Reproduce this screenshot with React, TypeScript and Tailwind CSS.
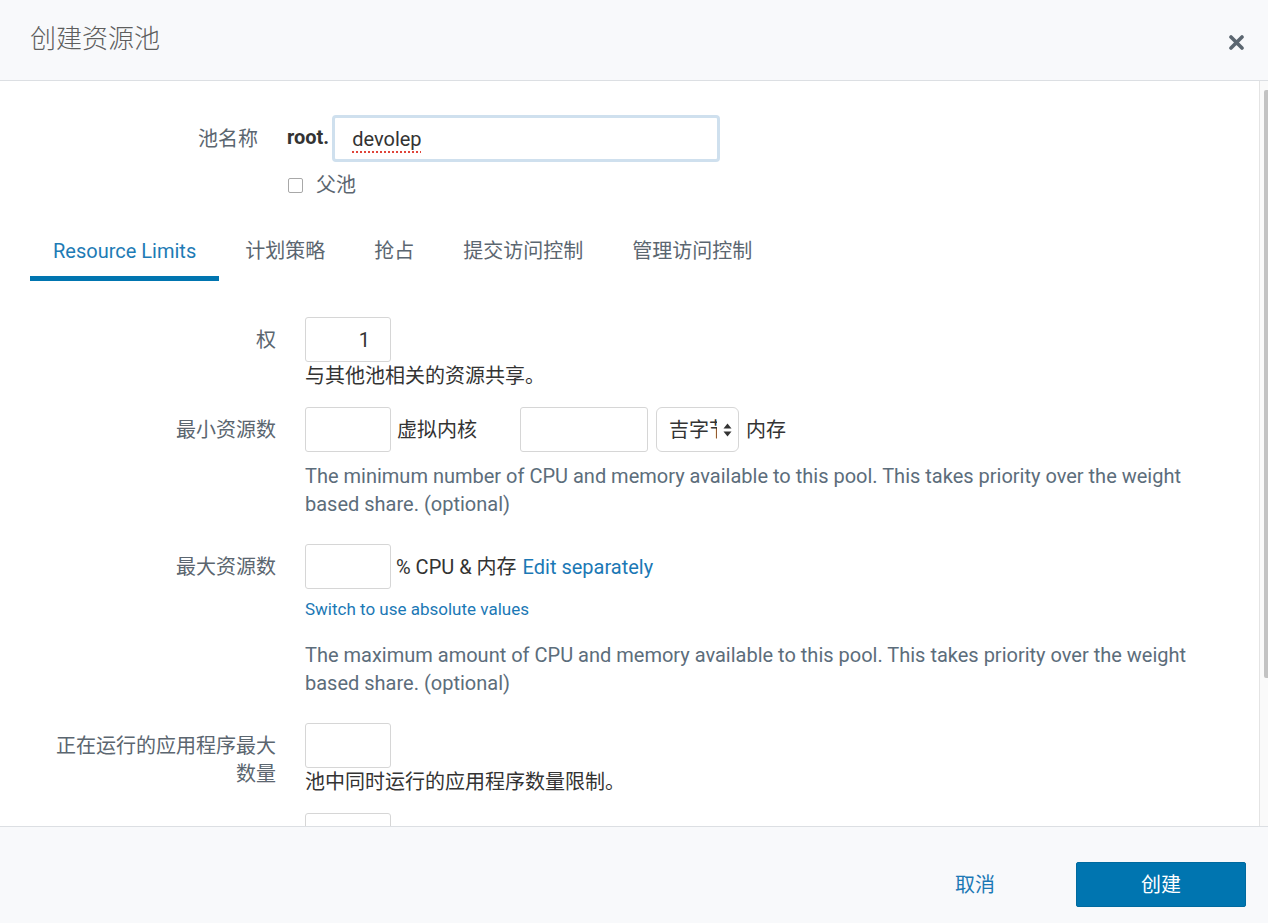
import React from "react";

function CloseIcon() {
  return (
    <svg width="15" height="15" viewBox="0 0 15 15" className="block">
      <path d="M2 2 L13 13 M13 2 L2 13" stroke="#5b6670" strokeWidth="3.6" strokeLinecap="round" />
    </svg>
  );
}

function SelectArrows() {
  return (
    <svg width="9" height="16" viewBox="0 0 9 16" className="block">
      <path d="M0.5 6.5 L4.5 1.5 L8.5 6.5 Z" fill="#333" />
      <path d="M0.5 9.5 L4.5 14.5 L8.5 9.5 Z" fill="#333" />
    </svg>
  );
}

function Box({ w = "w-[86px]", children }: { w?: string; children?: React.ReactNode }) {
  return (
    <div
      className={`${w} h-[45px] shrink-0 border border-[#d6d6d6] rounded-[3px] bg-white flex items-center justify-end pr-[20px] text-[#333]`}
    >
      {children}
    </div>
  );
}

function Row({ label, children, className = "" }: { label: React.ReactNode; children: React.ReactNode; className?: string }) {
  return (
    <div className={`flex ${className}`}>
      <div className="w-[276px] shrink-0 pl-[46px] pt-[9px] text-right leading-[28px] text-[#5b6670]">
        {label}
      </div>
      <div className="ml-[29px] flex-1">{children}</div>
    </div>
  );
}

const tabs = ["Resource Limits", "计划策略", "抢占", "提交访问控制", "管理访问控制"];

export default function App() {
  return (
    <div className="w-[1268px] h-[923px] flex flex-col bg-white text-[20px] font-['Roboto','Noto_Sans_CJK_SC',sans-serif] overflow-hidden">
      {/* 헤더 */}
      <div className="h-[81px] shrink-0 border-b border-[#dcdfe3] bg-[#f8f9fb] flex items-center justify-between pl-[30px] pr-[24px]">
        <h1 className="text-[26px] font-light text-[#5e5e5e] leading-none -mt-[2px]">创建资源池</h1>
        <div className="mt-[4px]">
          <CloseIcon />
        </div>
      </div>

      {/* 본문 */}
      <div className="flex-1 flex overflow-hidden">
        <div className="flex-1 overflow-hidden">
          {/* 池名称 */}
          <div className="flex items-center mt-[34px]">
            <div className="w-[258px] text-right text-[#5b6670]">池名称</div>
            <div className="ml-[29px] font-bold text-[#333] -mt-[3px]">root.</div>
            <div className="ml-[3px] w-[388px] h-[47px] border-[3px] border-[#cfe0ee] rounded-[4px] flex items-center pl-[17px] text-[#333]">
              <span className="underline decoration-dotted decoration-[#e0453a] decoration-2 underline-offset-[6px]">devolep</span>
            </div>
          </div>
          <div className="flex items-center ml-[288px] mt-[9px] leading-[28px]">
            <div className="w-[15px] h-[15px] border border-[#a8a8a8] rounded-[2px] bg-white" />
            <span className="ml-[13px] text-[#5b6670]">父池</span>
          </div>

          {/* 탭 */}
          <div className="flex ml-[30px] mt-[38px]">
            {tabs.map((t, i) => (
              <div key={t} className={`flex flex-col ${i === 1 ? "ml-[1.5px]" : ""}`}>
                <div className={`leading-[28px] pb-[11px] ${i === 0 ? "px-[23px] text-[#1e7bb5]" : "px-[24.5px] text-[#5b6670]"}`}>{t}</div>
                <div className={`h-[5px] ${i === 0 ? "bg-[#0075b0]" : ""}`} />
              </div>
            ))}
          </div>

          {/* 권 */}
          <Row label="权" className="mt-[36px]">
            <Box>1</Box>
            <p className="leading-[28px] text-[#333]">与其他池相关的资源共享。</p>
          </Row>

          {/* 최소 */}
          <Row label="最小资源数" className="mt-[17px]">
            <div className="flex items-center">
              <Box />
              <span className="ml-[6px] text-[#333]">虚拟内核</span>
              <div className="ml-[43px]">
                <Box w="w-[128px]" />
              </div>
              <div className="ml-[8px] w-[83px] h-[45px] border border-[#d6d6d6] rounded-[6px] flex items-center pl-[12px] text-[#333]">
                <span className="w-[48px] overflow-hidden whitespace-nowrap">吉字节</span>
                <span className="ml-[6px]">
                  <SelectArrows />
                </span>
              </div>
              <span className="ml-[7px] text-[#333]">内存</span>
            </div>
            <p className="mt-[10px] mb-[9px] max-w-[905px] leading-[28px] text-[#5c6d7b]">
              The minimum number of CPU and memory available to this pool. This takes priority over the weight based share. (optional)
            </p>
          </Row>

          {/* 최대 */}
          <Row label="最大资源数" className="mt-[17px]">
            <div className="flex items-center">
              <Box />
              <span className="ml-[5px] text-[#333]">% CPU &amp; 内存</span>
              <span className="ml-[6px] text-[#1b78b5]">Edit separately</span>
            </div>
            <p className="mt-[8px] text-[17px] leading-[24px] text-[#1b78b5]">Switch to use absolute values</p>
            <p className="mt-[20px] mb-[9px] max-w-[905px] leading-[28px] text-[#5c6d7b]">
              The maximum amount of CPU and memory available to this pool. This takes priority over the weight based share. (optional)
            </p>
          </Row>

          {/* 실행 앱 수 */}
          <Row label="正在运行的应用程序最大数量" className="mt-[17px]">
            <Box />
            <p className="leading-[28px] text-[#333]">池中同时运行的应用程序数量限制。</p>
          </Row>

          <Row label="" className="mt-[17px]">
            <Box />
          </Row>
        </div>

        {/* 스크롤바 */}
        <div className="w-[9px] shrink-0 border-l border-[#e4e4e4] bg-[#fafafa]">
          <div className="ml-[4px] mt-[9px] h-[588px] w-[4px] rounded-l-[2px] bg-[#c3c3c3]" />
        </div>
      </div>

      {/* 푸터 */}
      <div className="h-[97px] shrink-0 border-t border-[#dcdfe3] bg-[#f8f9fb] flex items-start justify-end pt-[35px] pr-[22px]">
        <button className="mt-[9px] text-[#1b78b5] leading-[28px]">取消</button>
        <button className="ml-[81px] w-[170px] h-[45px] rounded-[2px] border border-[#006a9f] bg-[#0075b0] text-white">
          创建
        </button>
      </div>
    </div>
  );
}
